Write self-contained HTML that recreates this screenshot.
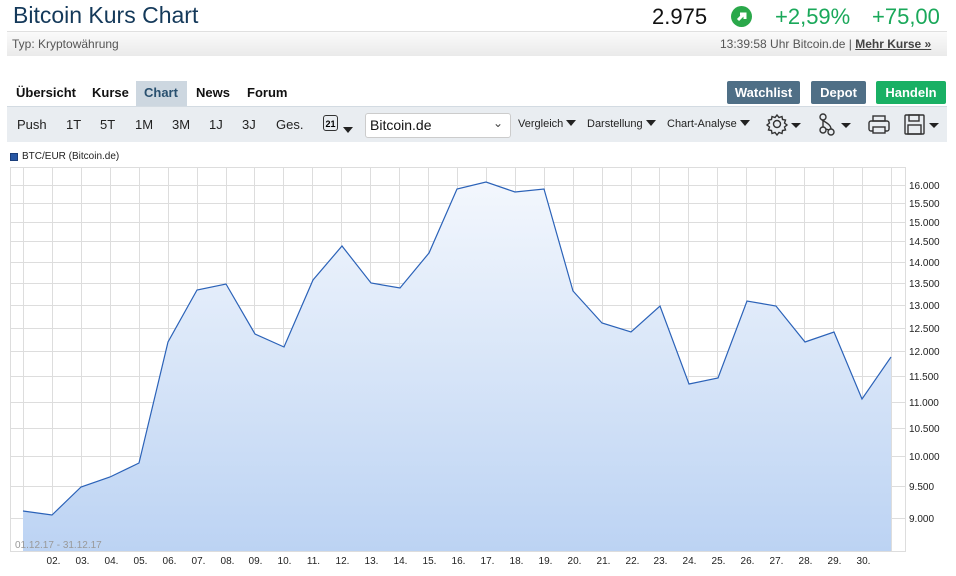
<!DOCTYPE html>
<html><head><meta charset="utf-8"><style>
body{margin:0;width:956px;height:576px;overflow:hidden;background:#fff;font-family:"Liberation Sans",sans-serif;position:relative}
.a{position:absolute;white-space:nowrap}
.tab{position:absolute;top:85px;font-size:13px;font-weight:bold;color:#111}
.btn{position:absolute;top:81px;height:23px;color:#fff;font-size:13px;font-weight:bold;text-align:center;line-height:23px;border-radius:2px}
.tb{position:absolute;top:117px;font-size:13px;color:#222}
.dd{position:absolute;top:118px;font-size:11px;color:#222}
.tri{display:inline-block;width:0;height:0;border-left:5px solid transparent;border-right:5px solid transparent;border-top:6px solid #222;margin-left:3px;vertical-align:1px}
</style></head><body>
<div class="a" style="left:13px;top:2px;font-size:23px;color:#14395a">Bitcoin Kurs Chart</div>
<div class="a" style="left:652px;top:4px;font-size:22px;color:#111">2.975</div>
<div class="a" style="left:731px;top:6px;width:21px;height:21px;border-radius:50%;background:#2aa84a"></div>
<svg class="a" style="left:731px;top:6px" width="21" height="21"><path d="M7 14 L13 8 M9 8 H14 V13" stroke="#fff" stroke-width="3" fill="none"/></svg>
<div class="a" style="left:775px;top:4px;font-size:22px;color:#1aa85a">+2,59%</div>
<div class="a" style="left:872px;top:4px;font-size:22px;color:#1aa85a">+75,00</div>
<div class="a" style="left:7px;top:31px;width:940px;height:24px;background:linear-gradient(#fafafa,#eaeaea);border-top:1px solid #e0e0e0"></div>
<div class="a" style="left:12px;top:37px;font-size:12px;color:#555">Typ: Kryptowährung</div>
<div class="a" style="left:720px;top:37px;font-size:12px;color:#555">13:39:58 Uhr Bitcoin.de | <b style="text-decoration:underline;color:#444">Mehr Kurse »</b></div>
<div class="a" style="left:136px;top:81px;width:51px;height:26px;background:#cdd7e0"></div>
<div class="tab" style="left:16px">Übersicht</div>
<div class="tab" style="left:92px">Kurse</div>
<div class="tab" style="left:144px;color:#29506f">Chart</div>
<div class="tab" style="left:196px">News</div>
<div class="tab" style="left:247px">Forum</div>
<div class="btn" style="left:727px;width:73px;background:#4f6f86">Watchlist</div>
<div class="btn" style="left:811px;width:55px;background:#4f6f86">Depot</div>
<div class="btn" style="left:876px;width:70px;background:#19b064">Handeln</div>
<div class="a" style="left:7px;top:106px;width:940px;height:35px;background:#e9edf1;border-top:1px solid #d3dbe2"></div>
<div class="tb" style="left:17px">Push</div><div class="tb" style="left:66px">1T</div><div class="tb" style="left:100px">5T</div><div class="tb" style="left:135px">1M</div><div class="tb" style="left:172px">3M</div><div class="tb" style="left:209px">1J</div><div class="tb" style="left:242px">3J</div><div class="tb" style="left:276px">Ges.</div>
<div class="a" style="left:323px;top:115px;width:15px;height:16px;border:1.5px solid #333;border-radius:3px;font-size:9px;font-weight:bold;text-align:center;line-height:17px;box-sizing:border-box">21</div>
<div class="a" style="left:343px;top:121px"><span class="tri" style="margin:0"></span></div>
<div class="a" style="left:365px;top:113px;width:144px;height:23px;background:#fff;border:1px solid #ccc;border-radius:3px"></div>
<div class="a" style="left:370px;top:117px;font-size:14px;color:#111">Bitcoin.de</div>
<div class="a" style="left:493px;top:116px;font-size:12px;color:#444">⌄</div>
<div class="dd" style="left:518px">Vergleich<span class="tri"></span></div>
<div class="dd" style="left:587px">Darstellung<span class="tri"></span></div>
<div class="dd" style="left:667px">Chart-Analyse<span class="tri"></span></div>
<svg class="a" style="left:765px;top:112px" width="180" height="26" fill="none" stroke="#333" stroke-width="1.4">
<circle cx="12" cy="12" r="3.5"/><path d="M12 3 l2 2.5 3-1 0.5 3 3 0.5-1 3 2.5 2-2.5 2 1 3-3 0.5-0.5 3-3-1-2 2.5-2-2.5-3 1-0.5-3-3-0.5 1-3-2.5-2 2.5-2-1-3 3-0.5 0.5-3 3 1z"/>
<path d="M26 11 h10 l-5 5z" fill="#222" stroke="none"/>
<circle cx="58" cy="5" r="3"/><circle cx="58" cy="18" r="3"/><circle cx="66" cy="20" r="3"/><path d="M58 8v7 M61 17 l3 1 M57 8 c5 3 9 5 9 9"/>
<path d="M76 11 h10 l-5 5z" fill="#222" stroke="none"/>
<rect x="104" y="9" width="20" height="10" rx="2"/><rect x="108" y="4" width="12" height="5"/><rect x="108" y="15" width="12" height="6" fill="#e9edf1"/>
<rect x="140" y="3" width="19" height="19" rx="1"/><rect x="144" y="3" width="10" height="6"/><rect x="143" y="13" width="13" height="9"/>
<path d="M164 11 h10 l-5 5z" fill="#222" stroke="none"/>
</svg>
<div class="a" style="left:10px;top:153px;width:8px;height:8px;background:#2857a4;border:1px solid #1a3d7a;box-sizing:border-box"></div>
<div class="a" style="left:22px;top:151px;font-size:10px;color:#222">BTC/EUR (Bitcoin.de)</div>
<svg class="a" style="left:0;top:0" width="956" height="576" font-family="Liberation Sans" font-size="10">
<defs><linearGradient id="g" x1="0" y1="0" x2="0" y2="1"><stop offset="0" stop-color="#f3f7fd"/><stop offset="1" stop-color="#bcd3f3"/></linearGradient></defs>
<rect x="10.5" y="167.5" width="895" height="384" fill="#fff" stroke="#ddd"/>
<g stroke="#ddd" id="gl"></g>
<polygon fill="url(#g)" points="23,551 23,511 52,515 81,487 110,477 139,463 168,342 197,290 226,284 255,334 284,347 313,280 342,246 371,283 400,288 429,253 457,189 486,182 515,192 544,189 573,291 602,323 631,332 660,306 689,384 718,378 747,301 776,306 805,342 834,332 862,399 891,357 891,551"/>
<g stroke="#d2dcea" stroke-width="1" id="gl2"></g>
<polyline fill="none" stroke="#2b62b8" stroke-width="1.2" points="23,511 52,515 81,487 110,477 139,463 168,342 197,290 226,284 255,334 284,347 313,280 342,246 371,283 400,288 429,253 457,189 486,182 515,192 544,189 573,291 602,323 631,332 660,306 689,384 718,378 747,301 776,306 805,342 834,332 862,399 891,357"/>
<text x="15" y="548" fill="#999">01.12.17 - 31.12.17</text>
<g fill="#222" id="yl"></g><g fill="#222" id="xl" text-anchor="middle"></g>
</svg>
<script>
var ys=[185,203,222,241,262,283,305,328,351,376,402,428,456,486,518],vs=["16.000","15.500","15.000","14.500","14.000","13.500","13.000","12.500","12.000","11.500","11.000","10.500","10.000","9.500","9.000"];
var s="",t="",x="",yl="";
for(var d=1;d<=31;d++){var X=Math.round(23+28.93*(d-1))+.5;s+='<line x1="'+X+'" y1="167" x2="'+X+'" y2="551"/>';t+='<line x1="'+X+'" y1="185" x2="'+X+'" y2="551" opacity=".35"/>';if(d>=2&&d<=30)x+='<text x="'+(X+1)+'" y="564">'+(d<10?"0"+d:d)+'.</text>';}
ys.forEach(function(y,i){s+='<line x1="10" y1="'+(y+.5)+'" x2="905" y2="'+(y+.5)+'"/>';yl+='<text x="909" y="'+(y+4)+'">'+vs[i]+'</text>';});
document.getElementById("gl").innerHTML=s;document.getElementById("yl").innerHTML=yl;document.getElementById("xl").innerHTML=x;
</script>
</body></html>
